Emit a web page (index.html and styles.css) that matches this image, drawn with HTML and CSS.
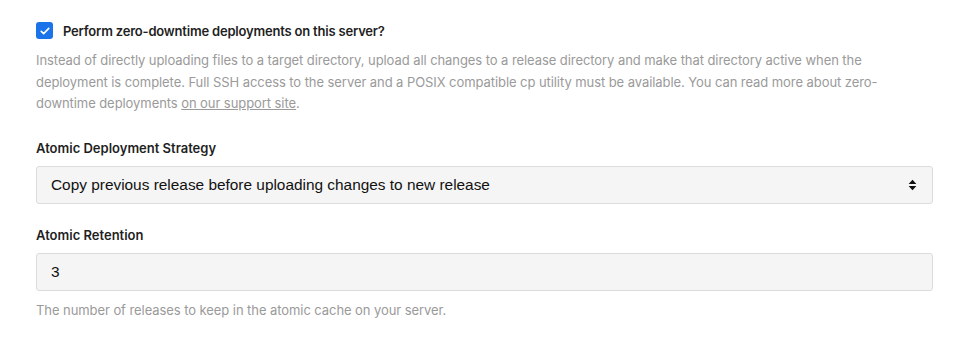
FILE: index.html
```html
<!DOCTYPE html>
<html lang="en">
<head>
    <meta charset="UTF-8">
    <title>Deployment Settings</title>
    <link rel="stylesheet" href="styles.css">
</head>
<body>
    <div class="settings">
        <!-- Zero-downtime toggle -->
        <div class="check-group">
            <label class="check-label">
                <span class="check-box">
                    <svg viewBox="0 0 16 16" width="12" height="12"><path d="M3 8.5l3.2 3L13 4.5" fill="none" stroke="#fff" stroke-width="2.2" stroke-linecap="round" stroke-linejoin="round"/></svg>
                </span>
                Perform zero-downtime deployments on this server?
            </label>
            <p class="help">Instead of directly uploading files to a target directory, upload all changes to a release directory and make that directory active when the deployment is complete. Full SSH access to the server and a POSIX compatible cp utility must be available. You can read more about zero-downtime deployments <a href="#">on our support site</a>.</p>
        </div>

        <div class="form-group">
            <label class="field-label">Atomic Deployment Strategy</label>
            <div class="select">
                <span>Copy previous release before uploading changes to new release</span>
                <svg class="select-arrow" viewBox="0 0 10 14" width="9" height="12"><path d="M5 1L9.5 5.8H0.5Z M5 13L9.5 8.2H0.5Z" fill="#111"/></svg>
            </div>
        </div>

        <div class="form-group">
            <label class="field-label">Atomic Retention</label>
            <div class="input">3</div>
            <p class="help help-small">The number of releases to keep in the atomic cache on your server.</p>
        </div>
    </div>
</body>
</html>
```

FILE: styles.css
```css
/* Base */
*, *::before, *::after {
    box-sizing: border-box;
    margin: 0;
    padding: 0;
}

body {
    font-family: 'Inter', 'Liberation Sans', sans-serif;
    background: #ffffff;
    color: #222;
}

.settings {
    padding: 22px 33px 0 36px;
}

/* Checkbox row */
.check-label {
    display: flex;
    align-items: center;
    gap: 10px;
    font-size: 13px;
    font-weight: 600;
    letter-spacing: -0.015em;
    color: #1f1f1f;
    height: 17px;
}

.check-box {
    width: 17px;
    height: 17px;
    border-radius: 3px;
    background: #1a73e8;
    display: flex;
    align-items: center;
    justify-content: center;
    flex-shrink: 0;
}

.help {
    margin-top: 11px;
    font-size: 13px;
    letter-spacing: -0.07px;
    line-height: 21.7px;
    color: #9a9a9a;
}

.help a {
    color: #9a9a9a;
    text-decoration: underline;
}

/* Fields */
.form-group {
    margin-top: 25px;
}

.form-group + .form-group {
    margin-top: 23px;
}

.field-label {
    display: block;
    font-size: 13px;
    font-weight: 600;
    color: #1f1f1f;
    margin-bottom: 10px;
}

.select,
.input {
    height: 38px;
    border: 1px solid #dcdcdc;
    border-radius: 3px;
    background: #f5f5f5;
    display: flex;
    align-items: center;
    justify-content: space-between;
    padding: 0 15px 0 14px;
    font-family: 'Liberation Sans', sans-serif;
    font-size: 15.4px;
    color: #111;
}

.help-small {
    margin-top: 9px;
}
```
